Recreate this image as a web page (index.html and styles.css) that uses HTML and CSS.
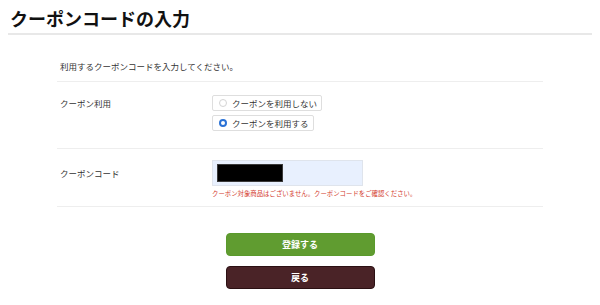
FILE: index.html
```html
<!DOCTYPE html>
<html lang="ja">

<head>
    <meta charset="UTF-8">
    <meta name="viewport" content="width=device-width, initial-scale=1.0">
    <title>クーポンコードの入力</title>
    <link rel="stylesheet" href="styles.css">
</head>

<body>
    <div class="page">
        <h1 class="page-title">クーポンコードの入力</h1>

        <div class="coupon-form">
            <p class="lead">利用するクーポンコードを入力してください。</p>

            <div class="form-row">
                <div class="label">クーポン利用</div>
                <div class="value radios">
                    <label class="radio-box">
                        <input type="radio" name="useCoupon" value="0">
                        <span>クーポンを利用しない</span>
                    </label>
                    <label class="radio-box">
                        <input type="radio" name="useCoupon" value="1" checked>
                        <span>クーポンを利用する</span>
                    </label>
                </div>
            </div>

            <div class="form-row code-row">
                <div class="label">クーポンコード</div>
                <div class="value">
                    <div class="code-field">
                        <span class="masked"></span>
                    </div>
                    <p class="error">クーポン対象商品はございません。クーポンコードをご確認ください。</p>
                </div>
            </div>

            <div class="actions">
                <a class="btn btn-submit" href="#">登録する</a>
                <a class="btn btn-back" href="#">戻る</a>
            </div>
        </div>
    </div>
</body>

</html>
```

FILE: styles.css
```css
* {
    margin: 0;
    padding: 0;
    box-sizing: border-box;
}

body {
    font-family: "Noto Sans CJK JP", "Noto Sans", sans-serif;
    background-color: #fff;
    color: #333;
}

.page {
    padding: 0 8px;
}

.page-title {
    font-size: 18px;
    font-weight: bold;
    line-height: 24px;
    color: #111;
    padding: 6px 0 3px 2px;
    border-bottom: 2px solid #e8e8e8;
}

.coupon-form {
    width: 486px;
    margin: 0 auto;
}

.lead {
    font-size: 8.5px;
    line-height: 12px;
    padding: 25px 3px 9px;
    border-bottom: 1px solid #eeeeee;
}

.form-row {
    display: grid;
    grid-template-columns: 152px 1fr;
    padding: 13px 0 17px 3px;
    border-bottom: 1px solid #eeeeee;
    font-size: 8.5px;
}

.form-row .label {
    line-height: 16px;
}

.radios {
    display: flex;
    flex-direction: column;
    align-items: flex-start;
    gap: 4px;
}

.radio-box {
    display: flex;
    align-items: center;
    gap: 5px;
    height: 16px;
    padding: 0 4px 0 6px;
    border: 1px solid #dedede;
    border-radius: 2px;
    line-height: 1;
}

.radio-box input {
    appearance: none;
    width: 8px;
    height: 8px;
    border-radius: 50%;
    border: 1px solid #d4d4d4;
    background-color: #fff;
}

.radio-box input:checked {
    border: 2.5px solid #2a72d6;
}

.code-row {
    padding: 11px 0 8px 3px;
}

.code-row .label {
    line-height: 26px;
}

.code-field {
    display: flex;
    align-items: center;
    width: 151px;
    height: 26px;
    padding: 0 4px;
    background-color: #e8f0fe;
    border: 1px solid #dfe4ec;
}

.masked {
    display: block;
    width: 66px;
    height: 18px;
    background-color: #000;
    border: 1px solid #3a3a3a;
}

.error {
    font-size: 6.4px;
    line-height: 8px;
    color: #d33a2c;
    margin-top: 4px;
}

.actions {
    display: flex;
    flex-direction: column;
    align-items: center;
    gap: 10px;
    padding-top: 26px;
}

.btn {
    display: block;
    width: 149px;
    height: 23px;
    line-height: 21px;
    border-radius: 4px;
    text-align: center;
    text-decoration: none;
    color: #fff;
    font-size: 9px;
    font-weight: bold;
}

.btn-submit {
    background-color: #609c30;
    border: 1px solid #5a9a2c;
}

.btn-back {
    background-color: #4a2327;
    border: 1px solid #2b1013;
}
```
